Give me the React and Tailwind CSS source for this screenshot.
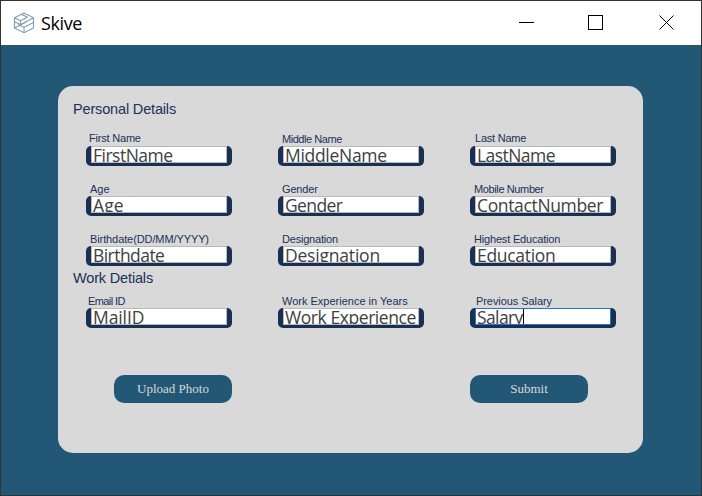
const personal = [
  { label: 'First Name', value: 'FirstName', labelClass: 'pl-[3px] pt-px tracking-[-0.2px]', valueClass: 'tracking-[-0.5px]' },
  { label: 'Middle Name', value: 'MiddleName', labelClass: 'pl-[4px] pt-[2px] tracking-[-0.45px]', valueClass: 'tracking-[-0.3px]' },
  { label: 'Last Name', value: 'LastName', labelClass: 'pl-[5px] pt-px tracking-[-0.22px]', valueClass: 'tracking-[-0.55px]' },
  { label: 'Age', value: 'Age', labelClass: 'pl-[4px] pt-[2px]', valueClass: 'tracking-[0.1px]' },
  { label: 'Gender', value: 'Gender', labelClass: 'pl-[4px] pt-[2px] tracking-[-0.15px]', valueClass: 'tracking-[-0.6px]' },
  { label: 'Mobile Number', value: 'ContactNumber', labelClass: 'pl-[4px] pt-[2px] tracking-[-0.38px]', valueClass: 'tracking-[-0.35px]' },
  { label: 'Birthdate(DD/MM/YYYY)', value: 'Birthdate', labelClass: 'pl-[4px] pt-[2px] tracking-[-0.1px]', valueClass: 'tracking-[-0.55px]' },
  { label: 'Designation', value: 'Designation', labelClass: 'pl-[4px] pt-[2px] tracking-[-0.2px]', valueClass: 'tracking-[-0.2px]' },
  { label: 'Highest Education', value: 'Education', labelClass: 'pl-[4px] pt-[2px] tracking-[-0.18px]', valueClass: 'tracking-[-0.3px]' },
];

const work = [
  { label: 'Email ID', value: 'MailID', labelClass: 'pl-[2px] pt-[2px] tracking-[-0.6px]', valueClass: 'tracking-[-0.1px]' },
  { label: 'Work Experience in Years', value: 'Work Experience', labelClass: 'pl-[4px] pt-[2px]', valueClass: 'tracking-[-0.43px]' },
  { label: 'Previous Salary', value: 'Salary', labelClass: 'pl-[6px] pt-[2px] tracking-[-0.07px]', valueClass: 'tracking-[-0.6px]', focused: true },
];

function Field({ label, value, labelClass, valueClass, focused }) {
  return (
    <label className="block h-9 w-[146px]">
      <span className={`block h-4 whitespace-nowrap text-[11px] leading-[14px] text-[#1a3158] ${labelClass}`}>{label}</span>
      <span className="block h-5 rounded-[5px] bg-[#193055] pr-[5px] pl-[5px]">
        <span className={`flex h-[17px] overflow-hidden border bg-white pl-px ${focused ? 'border-[#2a6fd6]' : 'border-[#b9b9b9]'}`}>
          <span className={`-mt-1 block h-6 font-['Open_Sans',sans-serif] text-[17.5px] leading-6 whitespace-nowrap text-[#404040] ${valueClass}`}>{value}</span>
          {focused && <span className="h-[15px] w-px shrink-0 bg-black" />}
        </span>
      </span>
    </label>
  );
}

function Logo() {
  return (
    <svg className="h-[22px] w-[22px]" viewBox="0 0 22 22" fill="none" stroke="#86a2b1" strokeWidth="1.2" strokeLinejoin="round">
      <path d="M11 1 1.5 5.7V16L11 20.7 20.5 16V5.7Z" />
      <path d="M1.5 5.7 7.5 8.7 14.5 5.2 8.5 2.4M7.5 8.7v3.8l7-3.5 6-3.3M1.5 16l9.5-4.8 3.5-2.2M20.5 10.5 11 15.2v5.5M11 15.2 5 12.8M1.5 9.8 7.5 12.5" />
    </svg>
  );
}

export default function App() {
  return (
    <div className="h-[496px] w-[702px] overflow-hidden border border-[#343234] bg-[#235776] font-['Liberation_Sans',Arial,sans-serif]">
      <header className="flex h-11 items-center bg-white pl-3">
        <Logo />
        <h1 className="ml-[6px] font-['Open_Sans',sans-serif] text-[18px] leading-6 tracking-[-0.4px] text-black">Skive</h1>
        <div className="mr-[27px] mb-px ml-auto flex gap-[55px]">
          <svg className="-mr-px" width="15" height="15" shapeRendering="crispEdges"><path d="M0 7.5h15" stroke="#000" /></svg>
          <svg width="15" height="15" shapeRendering="crispEdges"><path d="M.5.5h14v14H.5z" fill="none" stroke="#000" /></svg>
          <svg className="ml-px" width="15" height="15"><path d="m.5.5 14 14m0-14-14 14" stroke="#000" /></svg>
        </div>
      </header>
      <main className="mt-[41px] ml-[57px] h-[367px] w-[585px] rounded-[15px] bg-[#d9d9d9] pt-[14px] pl-[15px] text-[#1a3158]">
        <h2 className="h-[30px] text-[14.5px] leading-[18px] tracking-[-0.16px]">Personal Details</h2>
        <div className="ml-[13px] grid grid-cols-[146px_146px_146px] gap-x-[46px] gap-y-[14px]">
          {personal.map((f) => <Field key={f.value} {...f} />)}
        </div>
        <h2 className="h-[26px] pt-[3px] text-[14.5px] leading-[18px] tracking-[-0.16px]">Work Detials</h2>
        <div className="ml-[13px] grid grid-cols-[146px_146px_146px] gap-x-[46px]">
          {work.map((f) => <Field key={f.value} {...f} />)}
        </div>
        <div className="mt-[47px] ml-[41px] flex gap-[238px] font-['Liberation_Serif',serif] text-[13px] text-[#d9d9d9]">
          <button className="h-7 w-[118px] rounded-[10px] bg-[#235776]">Upload Photo</button>
          <button className="h-7 w-[118px] rounded-[10px] bg-[#235776]">Submit</button>
        </div>
      </main>
    </div>
  );
}
